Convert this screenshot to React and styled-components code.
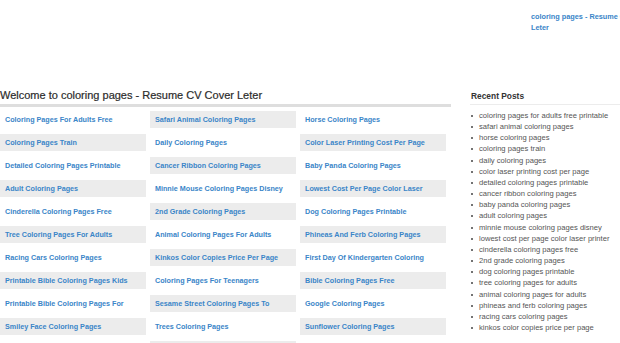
import React from 'react';
import styled, { createGlobalStyle } from 'styled-components';

const GlobalStyle = createGlobalStyle`
  html, body {
    margin: 0;
    padding: 0;
    background: #fff;
    overflow: hidden;
  }
  body {
    font-family: "Liberation Sans", Arial, sans-serif;
  }
`;

const Page = styled.div`
  width: 620px;
  height: 343px;
  overflow: hidden;
`;

const Header = styled.div`
  height: 88px;
  display: flex;
  padding-left: 531px;
  padding-top: 11px;
  box-sizing: border-box;
`;

const SiteLink = styled.a`
  display: block;
  width: 126px;
  flex: none;
  font-size: 7.3px;
  line-height: 11px;
  font-weight: bold;
  color: #3a85c8;
  text-decoration: none;
`;

const Body = styled.div`
  display: flex;
  align-items: flex-start;
`;

const Main = styled.div`
  width: 451px;
  flex: none;
`;

const Title = styled.h1`
  margin: 0;
  font-size: 11px;
  line-height: 14px;
  font-weight: normal;
  color: #2b2b2b;
  -webkit-text-stroke: 0.2px #2b2b2b;
  padding-bottom: 2px;
  border-bottom: 3px solid #dedede;
`;

const Grid = styled.div`
  display: grid;
  grid-template-columns: repeat(3, 146px);
  grid-auto-rows: 17px;
  column-gap: 4px;
  row-gap: 6px;
  margin-top: 4px;
`;

const Cell = styled.a`
  display: flex;
  align-items: center;
  padding-left: 5px;
  background: ${p => (p.$shaded ? '#ececec' : 'transparent')};
  font-size: 7.2px;
  font-weight: bold;
  color: #3a85c8;
  text-decoration: none;
  white-space: nowrap;
  overflow: hidden;
`;

const Sidebar = styled.div`
  margin-left: 19px;
  width: 150px;
  flex: none;
  padding-top: 2px;
`;

const SideTitle = styled.h3`
  margin: 0;
  font-size: 8.4px;
  line-height: 12px;
  font-weight: bold;
  color: #333;
  padding-left: 1px;
  padding-bottom: 2px;
  border-bottom: 1px solid #ececec;
`;

const PostList = styled.ul`
  list-style: none;
  margin: 5px 0 0;
  padding: 0;
`;

const Post = styled.li`
  position: relative;
  padding-left: 9px;
  font-size: 7.6px;
  line-height: 11.16px;
  color: #555;
  white-space: nowrap;
  &::before {
    content: '';
    position: absolute;
    left: 1px;
    top: 5px;
    width: 2px;
    height: 2px;
    border-radius: 50%;
    background: #444;
  }
`;

const pages = [
  'Coloring Pages For Adults Free',
  'Safari Animal Coloring Pages',
  'Horse Coloring Pages',
  'Coloring Pages Train',
  'Daily Coloring Pages',
  'Color Laser Printing Cost Per Page',
  'Detailed Coloring Pages Printable',
  'Cancer Ribbon Coloring Pages',
  'Baby Panda Coloring Pages',
  'Adult Coloring Pages',
  'Minnie Mouse Coloring Pages Disney',
  'Lowest Cost Per Page Color Laser',
  'Cinderella Coloring Pages Free',
  '2nd Grade Coloring Pages',
  'Dog Coloring Pages Printable',
  'Tree Coloring Pages For Adults',
  'Animal Coloring Pages For Adults',
  'Phineas And Ferb Coloring Pages',
  'Racing Cars Coloring Pages',
  'Kinkos Color Copies Price Per Page',
  'First Day Of Kindergarten Coloring',
  'Printable Bible Coloring Pages Kids',
  'Coloring Pages For Teenagers',
  'Bible Coloring Pages Free',
  'Printable Bible Coloring Pages For',
  'Sesame Street Coloring Pages To',
  'Google Coloring Pages',
  'Smiley Face Coloring Pages',
  'Trees Coloring Pages',
  'Sunflower Coloring Pages',
  'Flower Coloring Pages',
  'Butterfly Coloring Pages',
  'Unicorn Coloring Pages',
];

const recent = [
  'coloring pages for adults free printable',
  'safari animal coloring pages',
  'horse coloring pages',
  'coloring pages train',
  'daily coloring pages',
  'color laser printing cost per page',
  'detailed coloring pages printable',
  'cancer ribbon coloring pages',
  'baby panda coloring pages',
  'adult coloring pages',
  'minnie mouse coloring pages disney',
  'lowest cost per page color laser printer',
  'cinderella coloring pages free',
  '2nd grade coloring pages',
  'dog coloring pages printable',
  'tree coloring pages for adults',
  'animal coloring pages for adults',
  'phineas and ferb coloring pages',
  'racing cars coloring pages',
  'kinkos color copies price per page',
];

export default function App() {
  return (
    <Page>
      <GlobalStyle />
      <Header>
        <SiteLink href="#">coloring pages - Resume CV Cover Leter</SiteLink>
      </Header>
      <Body>
        <Main>
          <Title>Welcome to coloring pages - Resume CV Cover Leter</Title>
          <Grid>
            {pages.map((p, i) => (
              <Cell key={p} href="#" $shaded={i % 2 === 1}>{p}</Cell>
            ))}
          </Grid>
        </Main>
        <Sidebar>
          <SideTitle>Recent Posts</SideTitle>
          <PostList>
            {recent.map(r => (
              <Post key={r}>{r}</Post>
            ))}
          </PostList>
        </Sidebar>
      </Body>
    </Page>
  );
}
